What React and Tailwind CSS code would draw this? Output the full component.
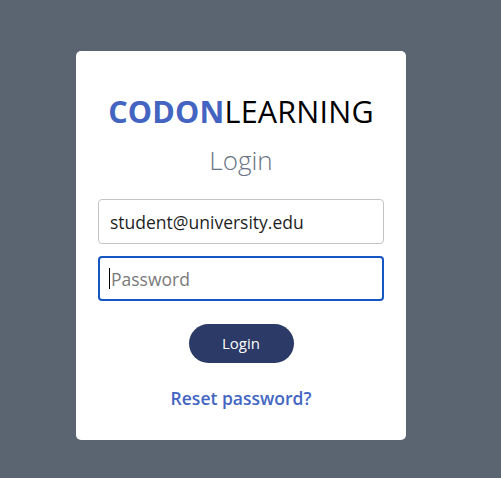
import React from "react";

export default function App() {
  return (
    <div
      className="min-h-[478px] w-full bg-[#5b6571] pt-[51px] pl-[76px]"
      style={{ fontFamily: '"Open Sans", "Noto Sans", sans-serif' }}
    >
      <div className="w-[330px] h-[389px] bg-white rounded-[5px] px-[22px] flex flex-col items-center">
        <h1 className="mt-[40px] text-[30.5px] leading-[40px] tracking-[0.2px] text-black">
          <span className="font-bold text-[#4464c2]">CODON</span>
          <span className="font-normal">LEARNING</span>
        </h1>
        <h2 className="mt-[12px] text-[26px] leading-[34px] font-light text-[#687385]">Login</h2>
        <input
          className="mt-[22px] w-full h-[45px] border border-[#c4c4c8] rounded-[4px] px-[11px] text-[17.5px] text-[#1f1f1f] outline-none"
          defaultValue="student@university.edu"
          readOnly
        />
        <div className="relative mt-[12px] w-full">
          <input
            className="w-full h-[45px] border-2 border-[#1556c2] rounded-[4px] px-[11px] text-[17.5px] text-[#1f1f1f] placeholder:text-[#7a7a7a] outline-none caret-black"
            placeholder="Password"
            type="password"
          />
          <span className="absolute left-[11px] top-[12px] h-[21px] w-px bg-black pointer-events-none" />
        </div>
        <button className="mt-[23px] w-[105px] h-[39px] rounded-full bg-[#2b3a66] text-white text-[15px]">
          Login
        </button>
        <a className="mt-[22px] text-[17.5px] font-semibold text-[#4466c3]" href="#">
          Reset password?
        </a>
      </div>
    </div>
  );
}
